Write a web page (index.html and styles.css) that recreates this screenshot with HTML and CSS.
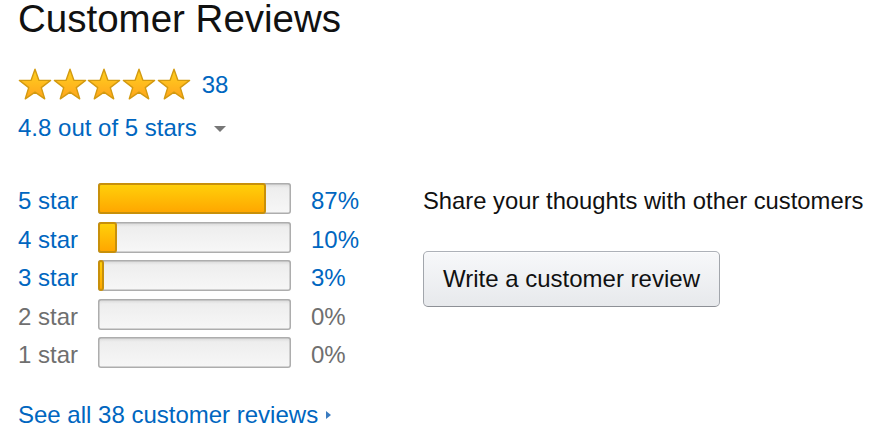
FILE: index.html
```html
<!DOCTYPE html>
<html lang="en">
<head>
    <meta charset="UTF-8">
    <title>Customer Reviews</title>
    <link rel="stylesheet" href="styles.css">
</head>
<body>
    <div class="reviews">
        <h2 class="reviews-title">Customer Reviews</h2>

        <div class="stars-row">
            <div class="stars">
                <svg class="star" viewBox="0 0 34 32"><use href="#star"></use></svg>
                <svg class="star" viewBox="0 0 34 32"><use href="#star"></use></svg>
                <svg class="star" viewBox="0 0 34 32"><use href="#star"></use></svg>
                <svg class="star" viewBox="0 0 34 32"><use href="#star"></use></svg>
                <svg class="star" viewBox="0 0 34 32"><use href="#star"></use></svg>
            </div>
            <a class="link count" href="#">38</a>
        </div>
        <div class="rating-text">
            <a class="link" href="#">4.8 out of 5 stars</a>
            <span class="caret-down"></span>
        </div>

        <div class="histogram">
            <div class="hist-table">
                <div class="hist-row">
                    <a class="hist-label link" href="#">5 star</a>
                    <div class="meter"><div class="meter-fill" style="width: 87%"></div></div>
                    <a class="hist-pct link" href="#">87%</a>
                </div>
                <div class="hist-row">
                    <a class="hist-label link" href="#">4 star</a>
                    <div class="meter"><div class="meter-fill" style="width: 10%"></div></div>
                    <a class="hist-pct link" href="#">10%</a>
                </div>
                <div class="hist-row">
                    <a class="hist-label link" href="#">3 star</a>
                    <div class="meter"><div class="meter-fill" style="width: 3%"></div></div>
                    <a class="hist-pct link" href="#">3%</a>
                </div>
                <div class="hist-row">
                    <span class="hist-label muted">2 star</span>
                    <div class="meter"></div>
                    <span class="hist-pct muted">0%</span>
                </div>
                <div class="hist-row">
                    <span class="hist-label muted">1 star</span>
                    <div class="meter"></div>
                    <span class="hist-pct muted">0%</span>
                </div>
            </div>

            <div class="share">
                <div class="share-text">Share your thoughts with other customers</div>
                <button class="write-btn">Write a customer review</button>
            </div>
        </div>

        <div class="see-all">
            <a class="link" href="#">See all 38 customer reviews</a>
            <span class="caret-right"></span>
        </div>
    </div>

    <svg width="0" height="0" class="defs">
        <defs>
            <linearGradient id="starFill" x1="0" y1="0" x2="0" y2="1">
                <stop offset="0" stop-color="#ffd21f"/>
                <stop offset="1" stop-color="#ffa41c"/>
            </linearGradient>
            <path id="star" d="M17 1.2 L20.9 12.2 L32.6 12.4 L23.3 19.6 L26.7 30.8 L17 24.1 L7.3 30.8 L10.7 19.6 L1.4 12.4 L13.1 12.2 Z"
                  fill="url(#starFill)" stroke="#d39a10" stroke-width="1.4" stroke-linejoin="round"/>
        </defs>
    </svg>
</body>
</html>
```

FILE: styles.css
```css
body {
    margin: 0;
    font-family: "Liberation Sans", Arial, sans-serif;
    font-size: 24px;
    color: #111;
    background-color: white;
}
.reviews {
    padding: 0 0 0 18px;
}
.reviews-title {
    margin: 0;
    font-size: 38.5px;
    font-weight: normal;
    line-height: 38px;
    color: #111;
}
.link {
    color: #0066c0;
    text-decoration: none;
}
.muted {
    color: #6f6f6f;
}
.defs {
    position: absolute;
}
.stars-row {
    display: flex;
    align-items: center;
    gap: 11px;
    margin-top: 30px;
    height: 32px;
}
.stars {
    display: flex;
    gap: 0.7px;
}
.star {
    width: 34px;
    height: 32px;
    display: block;
}
.count {
    line-height: 28px;
    padding-top: 1px;
}
.rating-text {
    display: flex;
    align-items: center;
    gap: 17px;
    margin-top: 14px;
    line-height: 28px;
}
.caret-down {
    width: 0;
    height: 0;
    border-left: 6px solid transparent;
    border-right: 6px solid transparent;
    border-top: 6px solid #777;
    margin-top: 1px;
}
.histogram {
    display: flex;
    margin-top: 41px;
}
.hist-table {
    flex: 0 0 405px;
    display: flex;
    flex-direction: column;
    gap: 3.6px;
}
.hist-row {
    display: flex;
    align-items: flex-start;
}
.hist-label {
    width: 80px;
    line-height: 35px;
}
.hist-pct {
    margin-left: 20px;
    line-height: 35px;
}
.meter {
    width: 193px;
    height: 31px;
    border-radius: 3px;
    background: linear-gradient(to bottom, #ececec, #f7f7f7);
    box-shadow: inset 0 0 0 1.5px #adadad, inset 0 3px 3px rgba(0,0,0,0.08);
}
.meter-fill {
    height: 100%;
    box-sizing: border-box;
    border: 2px solid #c8900a;
    border-radius: 3px;
    background: linear-gradient(to bottom, #ffcf0a, #ffa700);
}
.share-text {
    line-height: 35px;
    font-size: 23.8px;
    white-space: nowrap;
}
.write-btn {
    display: block;
    margin-top: 33px;
    width: 297px;
    height: 56px;
    padding: 0;
    font-family: inherit;
    font-size: 24px;
    color: #111;
    border: 1.5px solid #adb1b8;
    border-color: #adb1b8 #a2a6ac #8d9096;
    border-radius: 5px;
    background: linear-gradient(to bottom, #f7f8fa, #e7e9ec);
    box-shadow: inset 0 1px 0 rgba(255,255,255,0.6);
    cursor: pointer;
}
.see-all {
    display: flex;
    align-items: center;
    gap: 8px;
    margin-top: 28.6px;
    line-height: 28px;
}
.caret-right {
    width: 0;
    height: 0;
    border-top: 4px solid transparent;
    border-bottom: 4px solid transparent;
    border-left: 5px solid #3a7bc0;
    margin-top: 1px;
}
```
